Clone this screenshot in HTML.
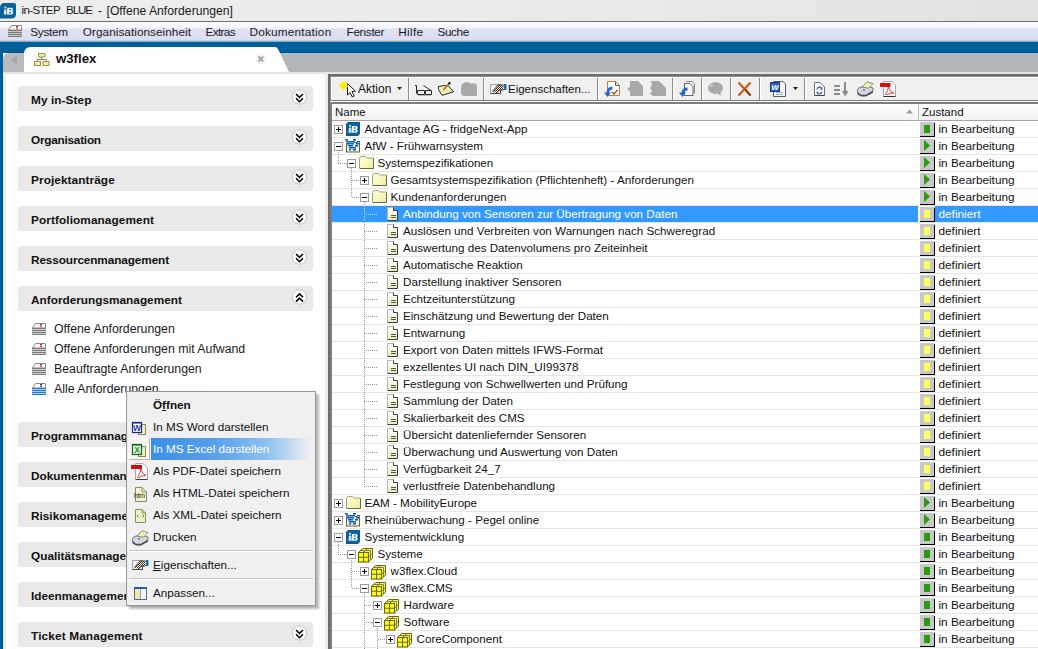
<!DOCTYPE html><html><head><meta charset="utf-8"><title>in-STEP BLUE</title><style>
*{box-sizing:border-box;margin:0;padding:0}
html,body{width:1038px;height:649px;overflow:hidden;background:#fff;font-family:"Liberation Sans", sans-serif;color:#000}
.a{position:absolute}
.t{position:absolute;white-space:nowrap;line-height:14px}
svg{position:absolute;overflow:visible}
</style></head><body>
<div class="a" style="left:0;top:0;width:1038px;height:21px;background:linear-gradient(90deg,#ededed 0%,#ebebeb 45%,#e6e6e6 80%,#e2e2e2 100%)"></div>
<div class="a" style="left:0;top:21px;width:1038px;height:1px;background:#6f6f6f"></div>
<svg style="left:0;top:0" width="17" height="20" viewBox="0 0 17 20"><path d="M4.5 3 H14 Q16 3 16 5 V13.5 Q16 18.6 11.5 18.6 H0 V8 Q0 3 4.5 3 Z" fill="#0a6098"/><g transform="translate(1.2,3.6) scale(1.02)"><rect x="3.2" y="3" width="1.8" height="1.7" fill="#e6f6ff"/><path d="M3 5.8 H5 L4.6 10.8 H2.6 Z" fill="#e6f6ff"/><path d="M6 4 H10 Q11.7 4 11.7 5.6 Q11.7 6.8 10.7 7.2 Q11.9 7.7 11.7 9.2 Q11.4 10.8 9.6 10.8 H5.2 Z" fill="#e6f6ff"/><rect x="8" y="5.3" width="1.6" height="1.3" fill="#0a6098"/><rect x="7.8" y="8.2" width="1.7" height="1.4" fill="#0a6098"/></g></svg>
<div class="t" style="left:21.5px;top:3.4px;font-size:11.6px;font-weight:400;color:#1a1a1a;letter-spacing:-0.667px">in-STEP</div>
<div class="t" style="left:66px;top:3.4px;font-size:11.6px;font-weight:400;color:#1a1a1a;letter-spacing:-1.074px">BLUE</div>
<div class="t" style="left:98px;top:4px;font-size:12.2px;font-weight:400;color:#1a1a1a;letter-spacing:-0.462px">-</div>
<div class="t" style="left:106.5px;top:4px;font-size:12.2px;font-weight:400;color:#1a1a1a;letter-spacing:0.000px">[Offene Anforderungen]</div>
<div class="a" style="left:0;top:22px;width:1038px;height:18px;background:linear-gradient(#fcfcfe 0px,#f3f4fa 6px,#dfe2f3 7px,#dcdff1 18px)"></div>
<div class="a" style="left:0;top:40px;width:1038px;height:1px;background:#c9cbd0"></div>
<svg style="left:8px;top:25px" width="15" height="13" viewBox="0 0 15 13"><path d="M3.5 0.5 H13.5 V5 H0.5 Z" fill="#fbfbfb" stroke="#8a8a8a" stroke-width="1"/><rect x="8" y="1" width="2" height="1.5" fill="#d02020"/><rect x="8" y="3" width="2" height="1.2" fill="#d02020" opacity="0.7"/><rect x="0" y="5" width="14" height="1" fill="#7a7a7a"/><rect x="0" y="6" width="14" height="1" fill="#c8c8c8"/><rect x="0" y="7" width="14" height="1" fill="#7a7a7a"/><rect x="0" y="8" width="14" height="1" fill="#c8c8c8"/><rect x="0" y="9" width="14" height="1" fill="#7a7a7a"/><rect x="0" y="10" width="14" height="1" fill="#c8c8c8"/><rect x="0" y="11" width="14" height="1" fill="#7a7a7a"/></svg>
<div class="t" style="left:30.3px;top:25px;font-size:11.8px;font-weight:400;color:#1b1b1b;letter-spacing:-0.307px">System</div>
<div class="t" style="left:82.8px;top:25px;font-size:11.8px;font-weight:400;color:#1b1b1b;letter-spacing:0.032px">Organisationseinheit</div>
<div class="t" style="left:205.5px;top:25px;font-size:11.8px;font-weight:400;color:#1b1b1b;letter-spacing:-0.656px">Extras</div>
<div class="t" style="left:249.5px;top:25px;font-size:11.8px;font-weight:400;color:#1b1b1b;letter-spacing:0.195px">Dokumentation</div>
<div class="t" style="left:346.5px;top:25px;font-size:11.8px;font-weight:400;color:#1b1b1b;letter-spacing:-0.329px">Fenster</div>
<div class="t" style="left:398.3px;top:25px;font-size:11.8px;font-weight:400;color:#1b1b1b;letter-spacing:0.298px">Hilfe</div>
<div class="t" style="left:437.4px;top:25px;font-size:11.8px;font-weight:400;color:#1b1b1b;letter-spacing:-0.371px">Suche</div>
<div class="a" style="left:0;top:41px;width:1038px;height:1px;background:#7fb3d6"></div>
<div class="a" style="left:0;top:42px;width:1038px;height:11px;background:#00609a"></div>
<div class="a" style="left:0;top:52px;width:1038px;height:1px;background:#005488"></div>
<div class="a" style="left:0;top:42px;width:3px;height:607px;background:#00609a"></div>
<div class="a" style="left:24px;top:53px;width:1014px;height:19px;background:#b2b6ba"></div>
<div class="a" style="left:24px;top:53px;width:1014px;height:1px;background:#a6bccc"></div>
<div class="a" style="left:3px;top:53px;width:24px;height:19px;background:#b9bcbf;border-top-left-radius:6px"></div>
<svg style="left:10px;top:56px" width="8" height="9"><path d="M7 0 V8 L0 4Z" fill="#a3a6aa"/></svg>
<svg style="left:24px;top:47px" width="270" height="26" viewBox="0 0 270 26"><path d="M0 25 V7 Q0 0 7 0 H251 Q253 0 254 2 L265 25 Z" fill="#ffffff"/></svg>
<svg style="left:34px;top:53px" width="16" height="13" viewBox="0 0 16 13"><rect x="4.5" y="0.5" width="6.5" height="3.5" fill="#f5ec9c" stroke="#a09548"/><path d="M7.5 4 V6.5 M3 6.5 H12.5 M3 6.5 V8 M12.5 6.5 V8" stroke="#808080" fill="none"/><rect x="0.5" y="8.5" width="6" height="4" fill="#f5ec9c" stroke="#a09548"/><rect x="9" y="8.5" width="6" height="4" fill="#f5ec9c" stroke="#a09548"/></svg>
<div class="t" style="left:56px;top:52px;font-size:13.2px;font-weight:700;color:#111">w3flex</div>
<svg style="left:255px;top:53px" width="12" height="12" viewBox="0 0 12 12"><circle cx="5.8" cy="6" r="4.8" fill="#fdfdfd" stroke="#e4e4e4" stroke-width="0.8"/><path d="M3.3 3.5 L8.3 8.5 M8.3 3.5 L3.3 8.5" stroke="#a4a4a4" stroke-width="1.9"/></svg>
<div class="a" style="left:3px;top:72px;width:1035px;height:2px;background:#e4e4e4"></div>
<div class="a" style="left:3px;top:74px;width:1px;height:575px;background:#cfe4f2"></div>
<div class="a" style="left:4px;top:74px;width:2px;height:575px;background:#f0f0f0"></div>
<div class="a" style="left:325px;top:72px;width:3px;height:577px;background:#ececec"></div>
<div class="a" style="left:18px;top:86px;width:295px;height:25px;background:#e9e9e9;border-radius:3px"></div>
<div class="t" style="left:31px;top:93px;font-size:11.8px;font-weight:700;color:#111;letter-spacing:0.084px">My in-Step</div>
<svg style="left:291px;top:88px" width="18" height="18" viewBox="291 88 18 18"><circle cx="299.5" cy="97" r="7.2" fill="#fff" stroke="#c4c4c4" stroke-width="1"/><path d="M296.0 94 L299.5 97.4 L303.0 94 M296.0 98.3 L299.5 101.7 L303.0 98.3" stroke="#000" stroke-width="1.55" fill="none"/></svg>
<div class="a" style="left:18px;top:126px;width:295px;height:25px;background:#e9e9e9;border-radius:3px"></div>
<div class="t" style="left:31px;top:133px;font-size:11.8px;font-weight:700;color:#111;letter-spacing:-0.247px">Organisation</div>
<svg style="left:291px;top:128px" width="18" height="18" viewBox="291 128 18 18"><circle cx="299.5" cy="137" r="7.2" fill="#fff" stroke="#c4c4c4" stroke-width="1"/><path d="M296.0 134 L299.5 137.4 L303.0 134 M296.0 138.3 L299.5 141.7 L303.0 138.3" stroke="#000" stroke-width="1.55" fill="none"/></svg>
<div class="a" style="left:18px;top:166px;width:295px;height:25px;background:#e9e9e9;border-radius:3px"></div>
<div class="t" style="left:31px;top:173px;font-size:11.8px;font-weight:700;color:#111;letter-spacing:0.085px">Projektantr&auml;ge</div>
<svg style="left:291px;top:168px" width="18" height="18" viewBox="291 168 18 18"><circle cx="299.5" cy="177" r="7.2" fill="#fff" stroke="#c4c4c4" stroke-width="1"/><path d="M296.0 174 L299.5 177.4 L303.0 174 M296.0 178.3 L299.5 181.7 L303.0 178.3" stroke="#000" stroke-width="1.55" fill="none"/></svg>
<div class="a" style="left:18px;top:206px;width:295px;height:25px;background:#e9e9e9;border-radius:3px"></div>
<div class="t" style="left:31px;top:213px;font-size:11.8px;font-weight:700;color:#111;letter-spacing:0.091px">Portfoliomanagement</div>
<svg style="left:291px;top:208px" width="18" height="18" viewBox="291 208 18 18"><circle cx="299.5" cy="217" r="7.2" fill="#fff" stroke="#c4c4c4" stroke-width="1"/><path d="M296.0 214 L299.5 217.4 L303.0 214 M296.0 218.3 L299.5 221.7 L303.0 218.3" stroke="#000" stroke-width="1.55" fill="none"/></svg>
<div class="a" style="left:18px;top:246px;width:295px;height:25px;background:#e9e9e9;border-radius:3px"></div>
<div class="t" style="left:31px;top:253px;font-size:11.8px;font-weight:700;color:#111;letter-spacing:-0.116px">Ressourcenmanagement</div>
<svg style="left:291px;top:248px" width="18" height="18" viewBox="291 248 18 18"><circle cx="299.5" cy="257" r="7.2" fill="#fff" stroke="#c4c4c4" stroke-width="1"/><path d="M296.0 254 L299.5 257.4 L303.0 254 M296.0 258.3 L299.5 261.7 L303.0 258.3" stroke="#000" stroke-width="1.55" fill="none"/></svg>
<div class="a" style="left:18px;top:286px;width:295px;height:25px;background:#e9e9e9;border-radius:3px"></div>
<div class="t" style="left:31px;top:293px;font-size:11.8px;font-weight:700;color:#111;letter-spacing:0.006px">Anforderungsmanagement</div>
<svg style="left:291px;top:288px" width="18" height="18" viewBox="291 288 18 18"><circle cx="299.5" cy="297" r="7.2" fill="#fff" stroke="#c4c4c4" stroke-width="1"/><path d="M296.0 301.6 L299.5 298.20000000000005 L303.0 301.6 M296.0 297.3 L299.5 293.90000000000003 L303.0 297.3" stroke="#000" stroke-width="1.55" fill="none"/></svg>
<div class="a" style="left:18px;top:422px;width:295px;height:25px;background:#e9e9e9;border-radius:3px"></div>
<div class="t" style="left:31px;top:429px;font-size:11.8px;font-weight:700;color:#111">Programmmanagement</div>
<svg style="left:291px;top:424px" width="18" height="18" viewBox="291 424 18 18"><circle cx="299.5" cy="433" r="7.2" fill="#fff" stroke="#c4c4c4" stroke-width="1"/><path d="M296.0 430 L299.5 433.4 L303.0 430 M296.0 434.3 L299.5 437.7 L303.0 434.3" stroke="#000" stroke-width="1.55" fill="none"/></svg>
<div class="a" style="left:18px;top:462px;width:295px;height:25px;background:#e9e9e9;border-radius:3px"></div>
<div class="t" style="left:31px;top:469px;font-size:11.8px;font-weight:700;color:#111">Dokumentenmanagement</div>
<svg style="left:291px;top:464px" width="18" height="18" viewBox="291 464 18 18"><circle cx="299.5" cy="473" r="7.2" fill="#fff" stroke="#c4c4c4" stroke-width="1"/><path d="M296.0 470 L299.5 473.4 L303.0 470 M296.0 474.3 L299.5 477.7 L303.0 474.3" stroke="#000" stroke-width="1.55" fill="none"/></svg>
<div class="a" style="left:18px;top:502px;width:295px;height:25px;background:#e9e9e9;border-radius:3px"></div>
<div class="t" style="left:31px;top:509px;font-size:11.8px;font-weight:700;color:#111">Risikomanagement</div>
<svg style="left:291px;top:504px" width="18" height="18" viewBox="291 504 18 18"><circle cx="299.5" cy="513" r="7.2" fill="#fff" stroke="#c4c4c4" stroke-width="1"/><path d="M296.0 510 L299.5 513.4 L303.0 510 M296.0 514.3 L299.5 517.7 L303.0 514.3" stroke="#000" stroke-width="1.55" fill="none"/></svg>
<div class="a" style="left:18px;top:542px;width:295px;height:25px;background:#e9e9e9;border-radius:3px"></div>
<div class="t" style="left:31px;top:549px;font-size:11.8px;font-weight:700;color:#111">Qualit&auml;tsmanagement</div>
<svg style="left:291px;top:544px" width="18" height="18" viewBox="291 544 18 18"><circle cx="299.5" cy="553" r="7.2" fill="#fff" stroke="#c4c4c4" stroke-width="1"/><path d="M296.0 550 L299.5 553.4 L303.0 550 M296.0 554.3 L299.5 557.7 L303.0 554.3" stroke="#000" stroke-width="1.55" fill="none"/></svg>
<div class="a" style="left:18px;top:582px;width:295px;height:25px;background:#e9e9e9;border-radius:3px"></div>
<div class="t" style="left:31px;top:589px;font-size:11.8px;font-weight:700;color:#111">Ideenmanagement</div>
<svg style="left:291px;top:584px" width="18" height="18" viewBox="291 584 18 18"><circle cx="299.5" cy="593" r="7.2" fill="#fff" stroke="#c4c4c4" stroke-width="1"/><path d="M296.0 590 L299.5 593.4 L303.0 590 M296.0 594.3 L299.5 597.7 L303.0 594.3" stroke="#000" stroke-width="1.55" fill="none"/></svg>
<div class="a" style="left:18px;top:622px;width:295px;height:25px;background:#e9e9e9;border-radius:3px"></div>
<div class="t" style="left:31px;top:629px;font-size:11.8px;font-weight:700;color:#111;letter-spacing:0.143px">Ticket Management</div>
<svg style="left:291px;top:624px" width="18" height="18" viewBox="291 624 18 18"><circle cx="299.5" cy="633" r="7.2" fill="#fff" stroke="#c4c4c4" stroke-width="1"/><path d="M296.0 630 L299.5 633.4 L303.0 630 M296.0 634.3 L299.5 637.7 L303.0 634.3" stroke="#000" stroke-width="1.55" fill="none"/></svg>
<svg style="left:32px;top:323px" width="15" height="13" viewBox="0 0 15 13"><path d="M3.5 0.5 H13.5 V5 H0.5 Z" fill="#fbfbfb" stroke="#8a8a8a" stroke-width="1"/><rect x="8" y="1" width="2" height="1.5" fill="#d02020"/><rect x="8" y="3" width="2" height="1.2" fill="#d02020" opacity="0.7"/><rect x="0" y="5" width="14" height="1" fill="#7a7a7a"/><rect x="0" y="6" width="14" height="1" fill="#d0d0d0"/><rect x="0" y="7" width="14" height="1" fill="#7a7a7a"/><rect x="0" y="8" width="14" height="1" fill="#d0d0d0"/><rect x="0" y="9" width="14" height="1" fill="#7a7a7a"/><rect x="0" y="10" width="14" height="1" fill="#d0d0d0"/><rect x="0" y="11" width="14" height="1" fill="#7a7a7a"/></svg>
<div class="t" style="left:54px;top:322px;font-size:12.3px;color:#1a1a1a">Offene Anforderungen</div>
<svg style="left:32px;top:343px" width="15" height="13" viewBox="0 0 15 13"><path d="M3.5 0.5 H13.5 V5 H0.5 Z" fill="#fbfbfb" stroke="#8a8a8a" stroke-width="1"/><rect x="8" y="1" width="2" height="1.5" fill="#d02020"/><rect x="8" y="3" width="2" height="1.2" fill="#d02020" opacity="0.7"/><rect x="0" y="5" width="14" height="1" fill="#7a7a7a"/><rect x="0" y="6" width="14" height="1" fill="#d0d0d0"/><rect x="0" y="7" width="14" height="1" fill="#7a7a7a"/><rect x="0" y="8" width="14" height="1" fill="#d0d0d0"/><rect x="0" y="9" width="14" height="1" fill="#7a7a7a"/><rect x="0" y="10" width="14" height="1" fill="#d0d0d0"/><rect x="0" y="11" width="14" height="1" fill="#7a7a7a"/></svg>
<div class="t" style="left:54px;top:342px;font-size:12.3px;color:#1a1a1a">Offene Anforderungen mit Aufwand</div>
<svg style="left:32px;top:363px" width="15" height="13" viewBox="0 0 15 13"><path d="M3.5 0.5 H13.5 V5 H0.5 Z" fill="#fbfbfb" stroke="#8a8a8a" stroke-width="1"/><rect x="8" y="1" width="2" height="1.5" fill="#d02020"/><rect x="8" y="3" width="2" height="1.2" fill="#d02020" opacity="0.7"/><rect x="0" y="5" width="14" height="1" fill="#7a7a7a"/><rect x="0" y="6" width="14" height="1" fill="#d0d0d0"/><rect x="0" y="7" width="14" height="1" fill="#7a7a7a"/><rect x="0" y="8" width="14" height="1" fill="#d0d0d0"/><rect x="0" y="9" width="14" height="1" fill="#7a7a7a"/><rect x="0" y="10" width="14" height="1" fill="#d0d0d0"/><rect x="0" y="11" width="14" height="1" fill="#7a7a7a"/></svg>
<div class="t" style="left:54px;top:362px;font-size:12.3px;color:#1a1a1a">Beauftragte Anforderungen</div>
<svg style="left:32px;top:383px" width="15" height="13" viewBox="0 0 15 13"><path d="M3.5 0.5 H13.5 V5 H0.5 Z" fill="#fbfbfb" stroke="#8a8a8a" stroke-width="1"/><rect x="8" y="1" width="2" height="1.5" fill="#1a3a8a"/><rect x="8" y="3" width="2" height="1.2" fill="#1a3a8a" opacity="0.7"/><rect x="0" y="5" width="14" height="1" fill="#2a78d0"/><rect x="0" y="6" width="14" height="1" fill="#a8d0f4"/><rect x="0" y="7" width="14" height="1" fill="#2a78d0"/><rect x="0" y="8" width="14" height="1" fill="#a8d0f4"/><rect x="0" y="9" width="14" height="1" fill="#2a78d0"/><rect x="0" y="10" width="14" height="1" fill="#a8d0f4"/><rect x="0" y="11" width="14" height="1" fill="#2a78d0"/></svg>
<div class="t" style="left:54px;top:382px;font-size:12.3px;color:#1a1a1a">Alle Anforderungen</div>
<div class="a" style="left:328px;top:74px;width:710px;height:575px;background:#6c6c6c"></div>
<div class="a" style="left:330px;top:76px;width:708px;height:25px;background:#8c8c8c"></div>
<div class="a" style="left:331px;top:77px;width:707px;height:23px;background:#ffffff"></div>
<div class="a" style="left:332px;top:78px;width:706px;height:22px;background:#f0f0f0"></div>
<div class="a" style="left:330px;top:100px;width:708px;height:1px;background:#7c7c7c"></div>
<div class="a" style="left:330px;top:101px;width:708px;height:1px;background:#ffffff"></div>
<div class="a" style="left:408px;top:78px;width:1px;height:22px;background:#8a8a8a"></div>
<div class="a" style="left:409px;top:78px;width:1px;height:22px;background:#ffffff"></div>
<div class="a" style="left:483px;top:78px;width:1px;height:22px;background:#8a8a8a"></div>
<div class="a" style="left:484px;top:78px;width:1px;height:22px;background:#ffffff"></div>
<div class="a" style="left:597px;top:78px;width:1px;height:22px;background:#8a8a8a"></div>
<div class="a" style="left:598px;top:78px;width:1px;height:22px;background:#ffffff"></div>
<div class="a" style="left:672px;top:78px;width:1px;height:22px;background:#8a8a8a"></div>
<div class="a" style="left:673px;top:78px;width:1px;height:22px;background:#ffffff"></div>
<div class="a" style="left:701px;top:78px;width:1px;height:22px;background:#8a8a8a"></div>
<div class="a" style="left:702px;top:78px;width:1px;height:22px;background:#ffffff"></div>
<div class="a" style="left:730px;top:78px;width:1px;height:22px;background:#8a8a8a"></div>
<div class="a" style="left:731px;top:78px;width:1px;height:22px;background:#ffffff"></div>
<div class="a" style="left:759px;top:78px;width:1px;height:22px;background:#8a8a8a"></div>
<div class="a" style="left:760px;top:78px;width:1px;height:22px;background:#ffffff"></div>
<div class="a" style="left:804px;top:78px;width:1px;height:22px;background:#8a8a8a"></div>
<div class="a" style="left:805px;top:78px;width:1px;height:22px;background:#ffffff"></div>
<div class="t" style="left:358px;top:82px;font-size:12px;color:#111">Aktion</div>
<svg style="left:397px;top:87px" width="6" height="4"><path d="M0 0 H5 L2.5 3Z" fill="#222"/></svg>
<div class="t" style="left:508px;top:82px;font-size:11.5px;color:#111">Eigenschaften...</div>
<svg style="left:793px;top:87px" width="6" height="4"><path d="M0 0 H5 L2.5 3Z" fill="#222"/></svg>
<svg style="left:0;top:0" width="1038" height="110" viewBox="0 0 1038 110"><defs><pattern id="chk" width="2" height="2" patternUnits="userSpaceOnUse"><rect width="2" height="2" fill="#fff6dc"/><rect width="1" height="1" fill="#3a3020"/><rect x="1" y="1" width="1" height="1" fill="#3a3020"/></pattern></defs>
<path d="M347.5 83.5 V95 L350 92.6 L352.3 97 L354.2 96.1 L352 91.6 L355.4 91.2 Z" fill="#fff" stroke="#1a1a1a" stroke-width="1" stroke-linejoin="miter"/><circle cx="343.5" cy="85.6" r="4.4" fill="#fff27a" opacity="0.55"/><circle cx="343.5" cy="85.6" r="3.1" fill="#ffee00"/><path d="M343.5 80.8 V90.4 M338.7 85.6 H348.3 M340.2 82.3 L346.8 88.9 M346.8 82.3 L340.2 88.9" stroke="#ffe800" stroke-width="0.9" opacity="0.8"/>
<path d="M415 85.5 H416.5 V93.5 M417.5 90.5 H424.5 V94.5 H417.5 Z M425.5 90.5 H431.5 V94.5 H425.5 Z M423.5 85.5 L431 90.5" stroke="#2a2a2a" fill="none" stroke-width="1"/><rect x="418" y="95" width="13" height="1" fill="#b8b8b8"/>
<path d="M438.5 86.5 L444.5 85.5 H448 L453.6 91.8 L442 95.3 L438.5 89.5 Z" fill="#eef2bc" stroke="#262626" stroke-width="1"/><path d="M443.2 90 L449 83.8" stroke="#c8804a" stroke-width="2"/><circle cx="449.4" cy="83.3" r="1.2" fill="#1a1a1a"/>
<path d="M461 88 Q461 82 467 82 Q469.5 82 470.5 83.5 H475 Q477 83.5 477 86 V96 H464 Q461 96 461 92 Z" fill="#a8a8a8"/>
<path d="M490.5 84.5 H500.5 V93.5 H490.5 Z" fill="#f4f4f4" stroke="#a0a0a0"/><path d="M490.5 93.5 H500.5 V88" stroke="#444" fill="none"/><path d="M492.5 91.5 L498 85 H503.5 V90 H499.5 L496.5 93 Z" fill="url(#chk)"/><path d="M492.5 91.5 L498 85 H503.5 M496.5 93 L499.5 90 H503.5" stroke="#2a2418" fill="none" stroke-width="0.9"/><rect x="504" y="84" width="2.5" height="6" fill="#1a70b0"/>
<path d="M607.5 81.5 H615.5 L619.5 85.5 V95.5 H607.5 Z" fill="#fff" stroke="#c08040"/><path d="M615.5 81.5 V85.5 H619.5" fill="none" stroke="#606060"/><path d="M612 92 L614 94 L617.5 90" stroke="#b04818" stroke-width="1.4" fill="none"/><path d="M612.5 86.5 Q607 86.5 606.5 92.5 H604 L607.5 97 L611 92.5 H609 Q609.5 89.5 612.5 89.5 Z" fill="#1e6ad0"/>
<path d="M630 81 H638 L643 86 V96 H630 V91.5 L627 89 L630 86.5 Z" fill="#a8a8a8"/>
<path d="M651 81 H659 L666 88 V96 H653 L650 94 L652 91 L650 88 L652 85 Z" fill="#a8a8a8"/>
<path d="M686.5 81.5 H692 L694.5 84 V93.5" fill="none" stroke="#808080"/><path d="M684.5 83.5 H690 L693 86.5 V95.5 H684.5 Z" fill="#f8f8f8" stroke="#606060"/><path d="M687.5 87.5 Q682 87.5 681.5 92.5 H679 L682.5 97 L686 92.5 H684 Q684.5 90.5 687.5 90.5 Z" fill="#1e6ad0"/>
<ellipse cx="715.5" cy="88" rx="7.5" ry="6" fill="#a8a8a8"/><path d="M716 92 L721 96 L720 91 Z" fill="#a8a8a8"/><ellipse cx="711.5" cy="85.5" rx="1.5" ry="1" fill="#d8d8d8"/>
<path d="M738.5 82.5 L750.5 95.5 M750.5 82.5 L738.5 95.5" stroke="#d05818" stroke-width="2.2"/><path d="M745 89 L750.5 95.5" stroke="#8a2a10" stroke-width="1.2"/>
<path d="M773.5 81.5 H783 L785.5 84 V96.5 H773.5 Z" fill="#f4f8ff" stroke="#505a70"/><path d="M776 92.5 H783 M776 94.5 H783" stroke="#9ab"/><rect x="770.5" y="82.5" width="9" height="9" fill="#2a62c8" stroke="#1a3a80"/><text x="775" y="90.3" text-anchor="middle" font-family="Liberation Sans" font-weight="700" font-style="italic" font-size="8" fill="#fff">W</text>
<path d="M814.5 82.5 H820 L824.5 87 V95.5 H814.5 Z" fill="#f8f8f8" stroke="#707070"/><path d="M814.5 95.5 H824.5" stroke="#404040"/><path d="M817 89.5 A2.6 2.6 0 0 1 822 88.8 M822 91.5 A2.6 2.6 0 0 1 817 92.2" stroke="#2a5ab0" fill="none" stroke-width="1.2"/><path d="M821 87.5 L823 89.5 L820.5 90Z M818 93.8 L816 92 L818.5 91.5Z" fill="#2a5ab0"/>
<path d="M834 86 H840 M834 90 H840 M834 94 H840" stroke="#8c8c8c" stroke-width="2"/><path d="M845 82 V94" stroke="#8c8c8c" stroke-width="2"/><path d="M842 91 H848.5 L845.2 96.5Z" fill="#8c8c8c"/>
<path d="M857.5 90 Q858 87.5 861 87 L868 86.5 L873 88 V91 L866 95.5 H861 Q857.5 95 857.5 92 Z" fill="#d4d8de" stroke="#5a5a5a" stroke-width="0.8"/><path d="M857.5 92 L861 94.8 H866 L873 90.8 V92.8 L866 96.6 H861 L857.5 94 Z" fill="#4a4a4a"/><path d="M862 87 L867 81.8 L873 83.6 L868.6 88.2 Z" fill="#eef2b4" stroke="#6a6a48" stroke-width="0.7"/><circle cx="864" cy="90" r="0.9" fill="#2a70c0"/>
<path d="M883.5 81.5 H892 L895.5 85 V96.5 H883.5 Z" fill="#fff" stroke="#a8a8a8"/><path d="M883.5 96.5 H895.5" stroke="#303030"/><rect x="880" y="83" width="10.5" height="4" fill="#d80c10"/><path d="M885.5 95 Q888 90 888.5 87 Q889.5 92 894 93 Q890 92.5 886.5 95" stroke="#e02828" fill="none" stroke-width="0.9"/>
</svg>
<div class="a" style="left:330px;top:102px;width:708px;height:547px;background:#7c7c7c"></div>
<div class="a" style="left:332px;top:104px;width:706px;height:545px;background:#fff"></div>
<div class="a" style="left:333px;top:105px;width:705px;height:15px;background:linear-gradient(#fdfdfd,#f2f2f2)"></div>
<div class="a" style="left:332px;top:120px;width:706px;height:1px;background:#a6a6a6"></div>
<div class="a" style="left:918px;top:104px;width:1px;height:16px;background:#bcbcbc"></div>
<div class="t" style="left:335px;top:105px;font-size:11.5px;color:#111">Name</div>
<svg style="left:906px;top:109px" width="8" height="5"><path d="M0 4.5 H7 L3.5 0.5Z" fill="#9a9a9a"/></svg>
<div class="t" style="left:922px;top:105px;font-size:11.5px;color:#111">Zustand</div>
<div class="a" style="left:0;top:0;width:1038px;height:649px;overflow:hidden"><svg style="left:0;top:0" width="1038" height="649" viewBox="0 0 1038 649">
<defs><linearGradient id="fold" x1="0" y1="0" x2="1" y2="1"><stop offset="0" stop-color="#fdfde6"/><stop offset="0.6" stop-color="#f6f6b8"/><stop offset="1" stop-color="#e8e8a0"/></linearGradient><linearGradient id="docg" x1="0" y1="0" x2="0" y2="1"><stop offset="0" stop-color="#ffffff"/><stop offset="0.35" stop-color="#fafaf0"/><stop offset="1" stop-color="#e4ecbc"/></linearGradient><pattern id="dotv" width="1" height="2" patternUnits="userSpaceOnUse"><rect width="1" height="1" fill="#9a9a9a"/></pattern><pattern id="doth" width="2" height="1" patternUnits="userSpaceOnUse"><rect width="1" height="1" fill="#9a9a9a"/></pattern><pattern id="dotvL" width="1" height="2" patternUnits="userSpaceOnUse"><rect width="1" height="1" fill="#b8d8ff"/></pattern><pattern id="dothL" width="2" height="1" patternUnits="userSpaceOnUse"><rect width="1" height="1" fill="#b8d8ff"/></pattern></defs>
<rect x="332" y="137" width="706" height="1" fill="#e6e6e6"/>
<rect x="332" y="154" width="706" height="1" fill="#e6e6e6"/>
<rect x="332" y="171" width="706" height="1" fill="#e6e6e6"/>
<rect x="332" y="188" width="706" height="1" fill="#e6e6e6"/>
<rect x="332" y="205" width="706" height="1" fill="#e6e6e6"/>
<rect x="332" y="206" width="586" height="16" fill="#3399ff"/>
<rect x="935" y="206" width="103" height="16" fill="#3399ff"/>
<rect x="332" y="222" width="706" height="1" fill="#e6e6e6"/>
<rect x="332" y="239" width="706" height="1" fill="#e6e6e6"/>
<rect x="332" y="256" width="706" height="1" fill="#e6e6e6"/>
<rect x="332" y="273" width="706" height="1" fill="#e6e6e6"/>
<rect x="332" y="290" width="706" height="1" fill="#e6e6e6"/>
<rect x="332" y="307" width="706" height="1" fill="#e6e6e6"/>
<rect x="332" y="324" width="706" height="1" fill="#e6e6e6"/>
<rect x="332" y="341" width="706" height="1" fill="#e6e6e6"/>
<rect x="332" y="358" width="706" height="1" fill="#e6e6e6"/>
<rect x="332" y="375" width="706" height="1" fill="#e6e6e6"/>
<rect x="332" y="392" width="706" height="1" fill="#e6e6e6"/>
<rect x="332" y="409" width="706" height="1" fill="#e6e6e6"/>
<rect x="332" y="426" width="706" height="1" fill="#e6e6e6"/>
<rect x="332" y="443" width="706" height="1" fill="#e6e6e6"/>
<rect x="332" y="460" width="706" height="1" fill="#e6e6e6"/>
<rect x="332" y="477" width="706" height="1" fill="#e6e6e6"/>
<rect x="332" y="494" width="706" height="1" fill="#e6e6e6"/>
<rect x="332" y="511" width="706" height="1" fill="#e6e6e6"/>
<rect x="332" y="528" width="706" height="1" fill="#e6e6e6"/>
<rect x="332" y="545" width="706" height="1" fill="#e6e6e6"/>
<rect x="332" y="562" width="706" height="1" fill="#e6e6e6"/>
<rect x="332" y="579" width="706" height="1" fill="#e6e6e6"/>
<rect x="332" y="596" width="706" height="1" fill="#e6e6e6"/>
<rect x="332" y="613" width="706" height="1" fill="#e6e6e6"/>
<rect x="332" y="630" width="706" height="1" fill="#e6e6e6"/>
<rect x="332" y="647" width="706" height="1" fill="#e6e6e6"/>
<rect x="338" y="163" width="9" height="1" fill="url(#doth)"/>
<rect x="351" y="180" width="9" height="1" fill="url(#doth)"/>
<rect x="351" y="197" width="9" height="1" fill="url(#doth)"/>
<rect x="364" y="214" width="14" height="1" fill="url(#doth)"/>
<rect x="364" y="231" width="14" height="1" fill="url(#doth)"/>
<rect x="364" y="248" width="14" height="1" fill="url(#doth)"/>
<rect x="364" y="265" width="14" height="1" fill="url(#doth)"/>
<rect x="364" y="282" width="14" height="1" fill="url(#doth)"/>
<rect x="364" y="299" width="14" height="1" fill="url(#doth)"/>
<rect x="364" y="316" width="14" height="1" fill="url(#doth)"/>
<rect x="364" y="333" width="14" height="1" fill="url(#doth)"/>
<rect x="364" y="350" width="14" height="1" fill="url(#doth)"/>
<rect x="364" y="367" width="14" height="1" fill="url(#doth)"/>
<rect x="364" y="384" width="14" height="1" fill="url(#doth)"/>
<rect x="364" y="401" width="14" height="1" fill="url(#doth)"/>
<rect x="364" y="418" width="14" height="1" fill="url(#doth)"/>
<rect x="364" y="435" width="14" height="1" fill="url(#doth)"/>
<rect x="364" y="452" width="14" height="1" fill="url(#doth)"/>
<rect x="364" y="469" width="14" height="1" fill="url(#doth)"/>
<rect x="364" y="486" width="14" height="1" fill="url(#doth)"/>
<rect x="338" y="554" width="9" height="1" fill="url(#doth)"/>
<rect x="351" y="571" width="9" height="1" fill="url(#doth)"/>
<rect x="351" y="588" width="9" height="1" fill="url(#doth)"/>
<rect x="364" y="605" width="9" height="1" fill="url(#doth)"/>
<rect x="364" y="622" width="9" height="1" fill="url(#doth)"/>
<rect x="377" y="639" width="9" height="1" fill="url(#doth)"/>
<rect x="338" y="151" width="1" height="12" fill="url(#dotv)"/>
<rect x="351" y="168" width="1" height="29" fill="url(#dotv)"/>
<rect x="364" y="202" width="1" height="284" fill="url(#dotv)"/>
<rect x="338" y="542" width="1" height="12" fill="url(#dotv)"/>
<rect x="351" y="559" width="1" height="29" fill="url(#dotv)"/>
<rect x="364" y="593" width="1" height="29" fill="url(#dotv)"/>
<rect x="377" y="627" width="1" height="12" fill="url(#dotv)"/>
<rect x="364" y="206" width="1" height="16" fill="url(#dotvL)"/><rect x="364" y="214" width="14" height="1" fill="url(#dothL)"/>
<rect x="364" y="622" width="1" height="27" fill="url(#dotv)"/>
<rect x="377" y="639" width="1" height="10" fill="url(#dotv)"/>
<rect x="334.5" y="125.5" width="8" height="8" fill="#fff" stroke="#9c9c9c"/>
<rect x="336" y="129" width="5" height="1" fill="#000"/>
<rect x="338" y="127" width="1" height="5" fill="#000"/>
<g transform="translate(346,122)"><path d="M2 0 H14 V12 L12 14 H0 V2 Z" fill="#0b5a90"/><rect x="1" y="1" width="12" height="12" fill="#0f66a2" opacity="0.7"/><rect x="3.2" y="3" width="1.8" height="1.7" fill="#e6f6ff"/><path d="M3 5.8 H5 L4.6 10.8 H2.6 Z" fill="#e6f6ff"/><path d="M6 4 H10 Q11.7 4 11.7 5.6 Q11.7 6.8 10.7 7.2 Q11.9 7.7 11.7 9.2 Q11.4 10.8 9.6 10.8 H5.2 Z" fill="#e6f6ff"/><rect x="8" y="5.3" width="1.6" height="1.3" fill="#0b5a90"/><rect x="7.8" y="8.2" width="1.7" height="1.4" fill="#0b5a90"/></g>
<rect x="920" y="122" width="15" height="15" fill="#c8c8c8"/><rect x="934" y="123" width="1" height="14" fill="#000"/><rect x="920" y="136" width="15" height="1" fill="#000"/><rect x="924" y="125" width="6" height="8" fill="#2a9a10"/>
<rect x="334.5" y="142.5" width="8" height="8" fill="#fff" stroke="#9c9c9c"/>
<rect x="336" y="146" width="5" height="1" fill="#000"/>
<rect x="346.5" y="142.5" width="13" height="9.5" fill="#f6f2d0" stroke="#6a6030"/><rect x="345" y="139" width="3" height="1" fill="#1d5aa8"/><rect x="345" y="140" width="3" height="1" fill="#5aaaf0"/><rect x="353" y="139" width="3" height="1" fill="#1d5aa8"/><rect x="353" y="140" width="3" height="1" fill="#5aaaf0"/><rect x="346" y="141" width="9" height="1" fill="#1d5aa8"/><rect x="346" y="142" width="9" height="1" fill="#5aaaf0"/><rect x="357" y="141" width="3" height="1" fill="#1d5aa8"/><rect x="357" y="142" width="3" height="1" fill="#5aaaf0"/><rect x="347" y="143" width="7" height="1" fill="#1d5aa8"/><rect x="347" y="144" width="7" height="1" fill="#5aaaf0"/><rect x="356" y="143" width="3" height="1" fill="#1d5aa8"/><rect x="356" y="144" width="3" height="1" fill="#5aaaf0"/><rect x="348" y="145" width="5" height="1" fill="#1d5aa8"/><rect x="348" y="146" width="5" height="1" fill="#5aaaf0"/><rect x="355" y="145" width="3" height="1" fill="#1d5aa8"/><rect x="355" y="146" width="3" height="1" fill="#5aaaf0"/><rect x="349" y="147" width="7" height="1" fill="#1d5aa8"/><rect x="349" y="148" width="7" height="1" fill="#5aaaf0"/><rect x="349" y="149" width="2" height="1" fill="#1d5aa8"/><rect x="349" y="150" width="2" height="1" fill="#5aaaf0"/><rect x="353" y="149" width="3" height="1" fill="#1d5aa8"/><rect x="353" y="150" width="3" height="1" fill="#5aaaf0"/>
<rect x="920" y="139" width="15" height="15" fill="#c8c8c8"/><rect x="934" y="140" width="1" height="14" fill="#000"/><rect x="920" y="153" width="15" height="1" fill="#000"/><path d="M924 140 L930 145.5 L924 151Z" fill="#2a9c0e"/>
<rect x="347.5" y="159.5" width="8" height="8" fill="#fff" stroke="#9c9c9c"/>
<rect x="349" y="163" width="5" height="1" fill="#000"/>
<path d="M359.5 168.5 V158.5 Q359.5 156.5 361.5 156.5 H365.5 L367 158 H373.5 V168.5 Z" fill="url(#fold)" stroke="#a8a470"/><path d="M360 168.5 H373.5 V158.5" fill="none" stroke="#6a6a40"/>
<rect x="920" y="156" width="15" height="15" fill="#c8c8c8"/><rect x="934" y="157" width="1" height="14" fill="#000"/><rect x="920" y="170" width="15" height="1" fill="#000"/><path d="M924 157 L930 162.5 L924 168Z" fill="#2a9c0e"/>
<rect x="360.5" y="176.5" width="8" height="8" fill="#fff" stroke="#9c9c9c"/>
<rect x="362" y="180" width="5" height="1" fill="#000"/>
<rect x="364" y="178" width="1" height="5" fill="#000"/>
<path d="M372.5 185.5 V175.5 Q372.5 173.5 374.5 173.5 H378.5 L380 175 H386.5 V185.5 Z" fill="url(#fold)" stroke="#a8a470"/><path d="M373 185.5 H386.5 V175.5" fill="none" stroke="#6a6a40"/>
<rect x="920" y="173" width="15" height="15" fill="#c8c8c8"/><rect x="934" y="174" width="1" height="14" fill="#000"/><rect x="920" y="187" width="15" height="1" fill="#000"/><path d="M924 174 L930 179.5 L924 185Z" fill="#2a9c0e"/>
<rect x="360.5" y="193.5" width="8" height="8" fill="#fff" stroke="#9c9c9c"/>
<rect x="362" y="197" width="5" height="1" fill="#000"/>
<path d="M372.5 202.5 V192.5 Q372.5 190.5 374.5 190.5 H378.5 L380 192 H386.5 V202.5 Z" fill="url(#fold)" stroke="#a8a470"/><path d="M373 202.5 H386.5 V192.5" fill="none" stroke="#6a6a40"/>
<rect x="920" y="190" width="15" height="15" fill="#c8c8c8"/><rect x="934" y="191" width="1" height="14" fill="#000"/><rect x="920" y="204" width="15" height="1" fill="#000"/><path d="M924 191 L930 196.5 L924 202Z" fill="#2a9c0e"/>
<path d="M387.5 207.5 H393.5 V210.5 H397.5 V220.5 H387.5 Z" fill="url(#docg)"/><path d="M387.5 220.5 V207.5 H393.5" fill="none" stroke="#b4b4b0"/><path d="M393.5 207.5 V210.5 H397.5 V220.5 H387.5" fill="none" stroke="#3c3c36"/><rect x="391" y="215" width="5" height="1" fill="#4a5a3a"/><rect x="391" y="217" width="5" height="1" fill="#4a5a3a"/>
<rect x="920" y="207" width="15" height="15" fill="#c8c8c8"/><rect x="934" y="208" width="1" height="14" fill="#000"/><rect x="920" y="221" width="15" height="1" fill="#000"/><rect x="924" y="210" width="6" height="8" fill="#ffff60"/>
<path d="M387.5 224.5 H393.5 V227.5 H397.5 V237.5 H387.5 Z" fill="url(#docg)"/><path d="M387.5 237.5 V224.5 H393.5" fill="none" stroke="#b4b4b0"/><path d="M393.5 224.5 V227.5 H397.5 V237.5 H387.5" fill="none" stroke="#3c3c36"/><rect x="391" y="232" width="5" height="1" fill="#4a5a3a"/><rect x="391" y="234" width="5" height="1" fill="#4a5a3a"/>
<rect x="920" y="224" width="15" height="15" fill="#c8c8c8"/><rect x="934" y="225" width="1" height="14" fill="#000"/><rect x="920" y="238" width="15" height="1" fill="#000"/><rect x="924" y="227" width="6" height="8" fill="#ffff60"/>
<path d="M387.5 241.5 H393.5 V244.5 H397.5 V254.5 H387.5 Z" fill="url(#docg)"/><path d="M387.5 254.5 V241.5 H393.5" fill="none" stroke="#b4b4b0"/><path d="M393.5 241.5 V244.5 H397.5 V254.5 H387.5" fill="none" stroke="#3c3c36"/><rect x="391" y="249" width="5" height="1" fill="#4a5a3a"/><rect x="391" y="251" width="5" height="1" fill="#4a5a3a"/>
<rect x="920" y="241" width="15" height="15" fill="#c8c8c8"/><rect x="934" y="242" width="1" height="14" fill="#000"/><rect x="920" y="255" width="15" height="1" fill="#000"/><rect x="924" y="244" width="6" height="8" fill="#ffff60"/>
<path d="M387.5 258.5 H393.5 V261.5 H397.5 V271.5 H387.5 Z" fill="url(#docg)"/><path d="M387.5 271.5 V258.5 H393.5" fill="none" stroke="#b4b4b0"/><path d="M393.5 258.5 V261.5 H397.5 V271.5 H387.5" fill="none" stroke="#3c3c36"/><rect x="391" y="266" width="5" height="1" fill="#4a5a3a"/><rect x="391" y="268" width="5" height="1" fill="#4a5a3a"/>
<rect x="920" y="258" width="15" height="15" fill="#c8c8c8"/><rect x="934" y="259" width="1" height="14" fill="#000"/><rect x="920" y="272" width="15" height="1" fill="#000"/><rect x="924" y="261" width="6" height="8" fill="#ffff60"/>
<path d="M387.5 275.5 H393.5 V278.5 H397.5 V288.5 H387.5 Z" fill="url(#docg)"/><path d="M387.5 288.5 V275.5 H393.5" fill="none" stroke="#b4b4b0"/><path d="M393.5 275.5 V278.5 H397.5 V288.5 H387.5" fill="none" stroke="#3c3c36"/><rect x="391" y="283" width="5" height="1" fill="#4a5a3a"/><rect x="391" y="285" width="5" height="1" fill="#4a5a3a"/>
<rect x="920" y="275" width="15" height="15" fill="#c8c8c8"/><rect x="934" y="276" width="1" height="14" fill="#000"/><rect x="920" y="289" width="15" height="1" fill="#000"/><rect x="924" y="278" width="6" height="8" fill="#ffff60"/>
<path d="M387.5 292.5 H393.5 V295.5 H397.5 V305.5 H387.5 Z" fill="url(#docg)"/><path d="M387.5 305.5 V292.5 H393.5" fill="none" stroke="#b4b4b0"/><path d="M393.5 292.5 V295.5 H397.5 V305.5 H387.5" fill="none" stroke="#3c3c36"/><rect x="391" y="300" width="5" height="1" fill="#4a5a3a"/><rect x="391" y="302" width="5" height="1" fill="#4a5a3a"/>
<rect x="920" y="292" width="15" height="15" fill="#c8c8c8"/><rect x="934" y="293" width="1" height="14" fill="#000"/><rect x="920" y="306" width="15" height="1" fill="#000"/><rect x="924" y="295" width="6" height="8" fill="#ffff60"/>
<path d="M387.5 309.5 H393.5 V312.5 H397.5 V322.5 H387.5 Z" fill="url(#docg)"/><path d="M387.5 322.5 V309.5 H393.5" fill="none" stroke="#b4b4b0"/><path d="M393.5 309.5 V312.5 H397.5 V322.5 H387.5" fill="none" stroke="#3c3c36"/><rect x="391" y="317" width="5" height="1" fill="#4a5a3a"/><rect x="391" y="319" width="5" height="1" fill="#4a5a3a"/>
<rect x="920" y="309" width="15" height="15" fill="#c8c8c8"/><rect x="934" y="310" width="1" height="14" fill="#000"/><rect x="920" y="323" width="15" height="1" fill="#000"/><rect x="924" y="312" width="6" height="8" fill="#ffff60"/>
<path d="M387.5 326.5 H393.5 V329.5 H397.5 V339.5 H387.5 Z" fill="url(#docg)"/><path d="M387.5 339.5 V326.5 H393.5" fill="none" stroke="#b4b4b0"/><path d="M393.5 326.5 V329.5 H397.5 V339.5 H387.5" fill="none" stroke="#3c3c36"/><rect x="391" y="334" width="5" height="1" fill="#4a5a3a"/><rect x="391" y="336" width="5" height="1" fill="#4a5a3a"/>
<rect x="920" y="326" width="15" height="15" fill="#c8c8c8"/><rect x="934" y="327" width="1" height="14" fill="#000"/><rect x="920" y="340" width="15" height="1" fill="#000"/><rect x="924" y="329" width="6" height="8" fill="#ffff60"/>
<path d="M387.5 343.5 H393.5 V346.5 H397.5 V356.5 H387.5 Z" fill="url(#docg)"/><path d="M387.5 356.5 V343.5 H393.5" fill="none" stroke="#b4b4b0"/><path d="M393.5 343.5 V346.5 H397.5 V356.5 H387.5" fill="none" stroke="#3c3c36"/><rect x="391" y="351" width="5" height="1" fill="#4a5a3a"/><rect x="391" y="353" width="5" height="1" fill="#4a5a3a"/>
<rect x="920" y="343" width="15" height="15" fill="#c8c8c8"/><rect x="934" y="344" width="1" height="14" fill="#000"/><rect x="920" y="357" width="15" height="1" fill="#000"/><rect x="924" y="346" width="6" height="8" fill="#ffff60"/>
<path d="M387.5 360.5 H393.5 V363.5 H397.5 V373.5 H387.5 Z" fill="url(#docg)"/><path d="M387.5 373.5 V360.5 H393.5" fill="none" stroke="#b4b4b0"/><path d="M393.5 360.5 V363.5 H397.5 V373.5 H387.5" fill="none" stroke="#3c3c36"/><rect x="391" y="368" width="5" height="1" fill="#4a5a3a"/><rect x="391" y="370" width="5" height="1" fill="#4a5a3a"/>
<rect x="920" y="360" width="15" height="15" fill="#c8c8c8"/><rect x="934" y="361" width="1" height="14" fill="#000"/><rect x="920" y="374" width="15" height="1" fill="#000"/><rect x="924" y="363" width="6" height="8" fill="#ffff60"/>
<path d="M387.5 377.5 H393.5 V380.5 H397.5 V390.5 H387.5 Z" fill="url(#docg)"/><path d="M387.5 390.5 V377.5 H393.5" fill="none" stroke="#b4b4b0"/><path d="M393.5 377.5 V380.5 H397.5 V390.5 H387.5" fill="none" stroke="#3c3c36"/><rect x="391" y="385" width="5" height="1" fill="#4a5a3a"/><rect x="391" y="387" width="5" height="1" fill="#4a5a3a"/>
<rect x="920" y="377" width="15" height="15" fill="#c8c8c8"/><rect x="934" y="378" width="1" height="14" fill="#000"/><rect x="920" y="391" width="15" height="1" fill="#000"/><rect x="924" y="380" width="6" height="8" fill="#ffff60"/>
<path d="M387.5 394.5 H393.5 V397.5 H397.5 V407.5 H387.5 Z" fill="url(#docg)"/><path d="M387.5 407.5 V394.5 H393.5" fill="none" stroke="#b4b4b0"/><path d="M393.5 394.5 V397.5 H397.5 V407.5 H387.5" fill="none" stroke="#3c3c36"/><rect x="391" y="402" width="5" height="1" fill="#4a5a3a"/><rect x="391" y="404" width="5" height="1" fill="#4a5a3a"/>
<rect x="920" y="394" width="15" height="15" fill="#c8c8c8"/><rect x="934" y="395" width="1" height="14" fill="#000"/><rect x="920" y="408" width="15" height="1" fill="#000"/><rect x="924" y="397" width="6" height="8" fill="#ffff60"/>
<path d="M387.5 411.5 H393.5 V414.5 H397.5 V424.5 H387.5 Z" fill="url(#docg)"/><path d="M387.5 424.5 V411.5 H393.5" fill="none" stroke="#b4b4b0"/><path d="M393.5 411.5 V414.5 H397.5 V424.5 H387.5" fill="none" stroke="#3c3c36"/><rect x="391" y="419" width="5" height="1" fill="#4a5a3a"/><rect x="391" y="421" width="5" height="1" fill="#4a5a3a"/>
<rect x="920" y="411" width="15" height="15" fill="#c8c8c8"/><rect x="934" y="412" width="1" height="14" fill="#000"/><rect x="920" y="425" width="15" height="1" fill="#000"/><rect x="924" y="414" width="6" height="8" fill="#ffff60"/>
<path d="M387.5 428.5 H393.5 V431.5 H397.5 V441.5 H387.5 Z" fill="url(#docg)"/><path d="M387.5 441.5 V428.5 H393.5" fill="none" stroke="#b4b4b0"/><path d="M393.5 428.5 V431.5 H397.5 V441.5 H387.5" fill="none" stroke="#3c3c36"/><rect x="391" y="436" width="5" height="1" fill="#4a5a3a"/><rect x="391" y="438" width="5" height="1" fill="#4a5a3a"/>
<rect x="920" y="428" width="15" height="15" fill="#c8c8c8"/><rect x="934" y="429" width="1" height="14" fill="#000"/><rect x="920" y="442" width="15" height="1" fill="#000"/><rect x="924" y="431" width="6" height="8" fill="#ffff60"/>
<path d="M387.5 445.5 H393.5 V448.5 H397.5 V458.5 H387.5 Z" fill="url(#docg)"/><path d="M387.5 458.5 V445.5 H393.5" fill="none" stroke="#b4b4b0"/><path d="M393.5 445.5 V448.5 H397.5 V458.5 H387.5" fill="none" stroke="#3c3c36"/><rect x="391" y="453" width="5" height="1" fill="#4a5a3a"/><rect x="391" y="455" width="5" height="1" fill="#4a5a3a"/>
<rect x="920" y="445" width="15" height="15" fill="#c8c8c8"/><rect x="934" y="446" width="1" height="14" fill="#000"/><rect x="920" y="459" width="15" height="1" fill="#000"/><rect x="924" y="448" width="6" height="8" fill="#ffff60"/>
<path d="M387.5 462.5 H393.5 V465.5 H397.5 V475.5 H387.5 Z" fill="url(#docg)"/><path d="M387.5 475.5 V462.5 H393.5" fill="none" stroke="#b4b4b0"/><path d="M393.5 462.5 V465.5 H397.5 V475.5 H387.5" fill="none" stroke="#3c3c36"/><rect x="391" y="470" width="5" height="1" fill="#4a5a3a"/><rect x="391" y="472" width="5" height="1" fill="#4a5a3a"/>
<rect x="920" y="462" width="15" height="15" fill="#c8c8c8"/><rect x="934" y="463" width="1" height="14" fill="#000"/><rect x="920" y="476" width="15" height="1" fill="#000"/><rect x="924" y="465" width="6" height="8" fill="#ffff60"/>
<path d="M387.5 479.5 H393.5 V482.5 H397.5 V492.5 H387.5 Z" fill="url(#docg)"/><path d="M387.5 492.5 V479.5 H393.5" fill="none" stroke="#b4b4b0"/><path d="M393.5 479.5 V482.5 H397.5 V492.5 H387.5" fill="none" stroke="#3c3c36"/><rect x="391" y="487" width="5" height="1" fill="#4a5a3a"/><rect x="391" y="489" width="5" height="1" fill="#4a5a3a"/>
<rect x="920" y="479" width="15" height="15" fill="#c8c8c8"/><rect x="934" y="480" width="1" height="14" fill="#000"/><rect x="920" y="493" width="15" height="1" fill="#000"/><rect x="924" y="482" width="6" height="8" fill="#ffff60"/>
<rect x="334.5" y="499.5" width="8" height="8" fill="#fff" stroke="#9c9c9c"/>
<rect x="336" y="503" width="5" height="1" fill="#000"/>
<rect x="338" y="501" width="1" height="5" fill="#000"/>
<path d="M346.5 508.5 V498.5 Q346.5 496.5 348.5 496.5 H352.5 L354 498 H360.5 V508.5 Z" fill="url(#fold)" stroke="#a8a470"/><path d="M347 508.5 H360.5 V498.5" fill="none" stroke="#6a6a40"/>
<rect x="920" y="496" width="15" height="15" fill="#c8c8c8"/><rect x="934" y="497" width="1" height="14" fill="#000"/><rect x="920" y="510" width="15" height="1" fill="#000"/><path d="M924 497 L930 502.5 L924 508Z" fill="#2a9c0e"/>
<rect x="334.5" y="516.5" width="8" height="8" fill="#fff" stroke="#9c9c9c"/>
<rect x="336" y="520" width="5" height="1" fill="#000"/>
<rect x="338" y="518" width="1" height="5" fill="#000"/>
<rect x="346.5" y="516.5" width="13" height="9.5" fill="#f6f2d0" stroke="#6a6030"/><rect x="345" y="513" width="3" height="1" fill="#1d5aa8"/><rect x="345" y="514" width="3" height="1" fill="#5aaaf0"/><rect x="353" y="513" width="3" height="1" fill="#1d5aa8"/><rect x="353" y="514" width="3" height="1" fill="#5aaaf0"/><rect x="346" y="515" width="9" height="1" fill="#1d5aa8"/><rect x="346" y="516" width="9" height="1" fill="#5aaaf0"/><rect x="357" y="515" width="3" height="1" fill="#1d5aa8"/><rect x="357" y="516" width="3" height="1" fill="#5aaaf0"/><rect x="347" y="517" width="7" height="1" fill="#1d5aa8"/><rect x="347" y="518" width="7" height="1" fill="#5aaaf0"/><rect x="356" y="517" width="3" height="1" fill="#1d5aa8"/><rect x="356" y="518" width="3" height="1" fill="#5aaaf0"/><rect x="348" y="519" width="5" height="1" fill="#1d5aa8"/><rect x="348" y="520" width="5" height="1" fill="#5aaaf0"/><rect x="355" y="519" width="3" height="1" fill="#1d5aa8"/><rect x="355" y="520" width="3" height="1" fill="#5aaaf0"/><rect x="349" y="521" width="7" height="1" fill="#1d5aa8"/><rect x="349" y="522" width="7" height="1" fill="#5aaaf0"/><rect x="349" y="523" width="2" height="1" fill="#1d5aa8"/><rect x="349" y="524" width="2" height="1" fill="#5aaaf0"/><rect x="353" y="523" width="3" height="1" fill="#1d5aa8"/><rect x="353" y="524" width="3" height="1" fill="#5aaaf0"/>
<rect x="920" y="513" width="15" height="15" fill="#c8c8c8"/><rect x="934" y="514" width="1" height="14" fill="#000"/><rect x="920" y="527" width="15" height="1" fill="#000"/><path d="M924 514 L930 519.5 L924 525Z" fill="#2a9c0e"/>
<rect x="334.5" y="533.5" width="8" height="8" fill="#fff" stroke="#9c9c9c"/>
<rect x="336" y="537" width="5" height="1" fill="#000"/>
<g transform="translate(346,530)"><path d="M2 0 H14 V12 L12 14 H0 V2 Z" fill="#0b5a90"/><rect x="1" y="1" width="12" height="12" fill="#0f66a2" opacity="0.7"/><rect x="3.2" y="3" width="1.8" height="1.7" fill="#e6f6ff"/><path d="M3 5.8 H5 L4.6 10.8 H2.6 Z" fill="#e6f6ff"/><path d="M6 4 H10 Q11.7 4 11.7 5.6 Q11.7 6.8 10.7 7.2 Q11.9 7.7 11.7 9.2 Q11.4 10.8 9.6 10.8 H5.2 Z" fill="#e6f6ff"/><rect x="8" y="5.3" width="1.6" height="1.3" fill="#0b5a90"/><rect x="7.8" y="8.2" width="1.7" height="1.4" fill="#0b5a90"/></g>
<rect x="920" y="530" width="15" height="15" fill="#c8c8c8"/><rect x="934" y="531" width="1" height="14" fill="#000"/><rect x="920" y="544" width="15" height="1" fill="#000"/><rect x="924" y="533" width="6" height="8" fill="#2a9a10"/>
<rect x="347.5" y="550.5" width="8" height="8" fill="#fff" stroke="#9c9c9c"/>
<rect x="349" y="554" width="5" height="1" fill="#000"/>
<path d="M358.5 552.5 L362.5 548.5 H372.5 V558.0 L368.5 562.0 V552.5 Z" fill="#f2f27a" stroke="#6a6a08"/><path d="M363.5 552.5 L367.5 548.5 M360.5 550.5 H370.5 M368.5 557.25 L372.5 553.25 M370.5 550.5 V560.0" stroke="#6a6a08" stroke-width="0.8" fill="none"/><rect x="358.5" y="552.5" width="10" height="9.5" fill="#ffff10" stroke="#6a6a08" stroke-width="1.1"/><path d="M363.5 552.5 V562.0 M358.5 557.25 H368.5" stroke="#6a6a08" stroke-width="1.1"/>
<rect x="920" y="547" width="15" height="15" fill="#c8c8c8"/><rect x="934" y="548" width="1" height="14" fill="#000"/><rect x="920" y="561" width="15" height="1" fill="#000"/><rect x="924" y="550" width="6" height="8" fill="#2a9a10"/>
<rect x="360.5" y="567.5" width="8" height="8" fill="#fff" stroke="#9c9c9c"/>
<rect x="362" y="571" width="5" height="1" fill="#000"/>
<rect x="364" y="569" width="1" height="5" fill="#000"/>
<path d="M371.5 569.5 L375.5 565.5 H385.5 V575.0 L381.5 579.0 V569.5 Z" fill="#f2f27a" stroke="#6a6a08"/><path d="M376.5 569.5 L380.5 565.5 M373.5 567.5 H383.5 M381.5 574.25 L385.5 570.25 M383.5 567.5 V577.0" stroke="#6a6a08" stroke-width="0.8" fill="none"/><rect x="371.5" y="569.5" width="10" height="9.5" fill="#ffff10" stroke="#6a6a08" stroke-width="1.1"/><path d="M376.5 569.5 V579.0 M371.5 574.25 H381.5" stroke="#6a6a08" stroke-width="1.1"/>
<rect x="920" y="564" width="15" height="15" fill="#c8c8c8"/><rect x="934" y="565" width="1" height="14" fill="#000"/><rect x="920" y="578" width="15" height="1" fill="#000"/><rect x="924" y="567" width="6" height="8" fill="#2a9a10"/>
<rect x="360.5" y="584.5" width="8" height="8" fill="#fff" stroke="#9c9c9c"/>
<rect x="362" y="588" width="5" height="1" fill="#000"/>
<path d="M371.5 586.5 L375.5 582.5 H385.5 V592.0 L381.5 596.0 V586.5 Z" fill="#f2f27a" stroke="#6a6a08"/><path d="M376.5 586.5 L380.5 582.5 M373.5 584.5 H383.5 M381.5 591.25 L385.5 587.25 M383.5 584.5 V594.0" stroke="#6a6a08" stroke-width="0.8" fill="none"/><rect x="371.5" y="586.5" width="10" height="9.5" fill="#ffff10" stroke="#6a6a08" stroke-width="1.1"/><path d="M376.5 586.5 V596.0 M371.5 591.25 H381.5" stroke="#6a6a08" stroke-width="1.1"/>
<rect x="920" y="581" width="15" height="15" fill="#c8c8c8"/><rect x="934" y="582" width="1" height="14" fill="#000"/><rect x="920" y="595" width="15" height="1" fill="#000"/><rect x="924" y="584" width="6" height="8" fill="#2a9a10"/>
<rect x="373.5" y="601.5" width="8" height="8" fill="#fff" stroke="#9c9c9c"/>
<rect x="375" y="605" width="5" height="1" fill="#000"/>
<rect x="377" y="603" width="1" height="5" fill="#000"/>
<path d="M384.5 603.5 L388.5 599.5 H398.5 V609.0 L394.5 613.0 V603.5 Z" fill="#f2f27a" stroke="#6a6a08"/><path d="M389.5 603.5 L393.5 599.5 M386.5 601.5 H396.5 M394.5 608.25 L398.5 604.25 M396.5 601.5 V611.0" stroke="#6a6a08" stroke-width="0.8" fill="none"/><rect x="384.5" y="603.5" width="10" height="9.5" fill="#ffff10" stroke="#6a6a08" stroke-width="1.1"/><path d="M389.5 603.5 V613.0 M384.5 608.25 H394.5" stroke="#6a6a08" stroke-width="1.1"/>
<rect x="920" y="598" width="15" height="15" fill="#c8c8c8"/><rect x="934" y="599" width="1" height="14" fill="#000"/><rect x="920" y="612" width="15" height="1" fill="#000"/><rect x="924" y="601" width="6" height="8" fill="#2a9a10"/>
<rect x="373.5" y="618.5" width="8" height="8" fill="#fff" stroke="#9c9c9c"/>
<rect x="375" y="622" width="5" height="1" fill="#000"/>
<path d="M384.5 620.5 L388.5 616.5 H398.5 V626.0 L394.5 630.0 V620.5 Z" fill="#f2f27a" stroke="#6a6a08"/><path d="M389.5 620.5 L393.5 616.5 M386.5 618.5 H396.5 M394.5 625.25 L398.5 621.25 M396.5 618.5 V628.0" stroke="#6a6a08" stroke-width="0.8" fill="none"/><rect x="384.5" y="620.5" width="10" height="9.5" fill="#ffff10" stroke="#6a6a08" stroke-width="1.1"/><path d="M389.5 620.5 V630.0 M384.5 625.25 H394.5" stroke="#6a6a08" stroke-width="1.1"/>
<rect x="920" y="615" width="15" height="15" fill="#c8c8c8"/><rect x="934" y="616" width="1" height="14" fill="#000"/><rect x="920" y="629" width="15" height="1" fill="#000"/><rect x="924" y="618" width="6" height="8" fill="#2a9a10"/>
<rect x="386.5" y="635.5" width="8" height="8" fill="#fff" stroke="#9c9c9c"/>
<rect x="388" y="639" width="5" height="1" fill="#000"/>
<rect x="390" y="637" width="1" height="5" fill="#000"/>
<path d="M397.5 637.5 L401.5 633.5 H411.5 V643.0 L407.5 647.0 V637.5 Z" fill="#f2f27a" stroke="#6a6a08"/><path d="M402.5 637.5 L406.5 633.5 M399.5 635.5 H409.5 M407.5 642.25 L411.5 638.25 M409.5 635.5 V645.0" stroke="#6a6a08" stroke-width="0.8" fill="none"/><rect x="397.5" y="637.5" width="10" height="9.5" fill="#ffff10" stroke="#6a6a08" stroke-width="1.1"/><path d="M402.5 637.5 V647.0 M397.5 642.25 H407.5" stroke="#6a6a08" stroke-width="1.1"/>
<rect x="920" y="632" width="15" height="15" fill="#c8c8c8"/><rect x="934" y="633" width="1" height="14" fill="#000"/><rect x="920" y="646" width="15" height="1" fill="#000"/><rect x="924" y="635" width="6" height="8" fill="#2a9a10"/>
</svg>
<div class="t" style="left:364.5px;top:122px;font-size:11.65px;color:#111">Advantage AG - fridgeNext-App</div>
<div class="t" style="left:938.5px;top:122px;font-size:11.8px;color:#111">in Bearbeitung</div>
<div class="t" style="left:364.5px;top:139px;font-size:11.65px;color:#111">AfW - Fr&uuml;hwarnsystem</div>
<div class="t" style="left:938.5px;top:139px;font-size:11.8px;color:#111">in Bearbeitung</div>
<div class="t" style="left:377.5px;top:156px;font-size:11.65px;color:#111">Systemspezifikationen</div>
<div class="t" style="left:938.5px;top:156px;font-size:11.8px;color:#111">in Bearbeitung</div>
<div class="t" style="left:390.5px;top:173px;font-size:11.65px;color:#111">Gesamtsystemspezifikation (Pflichtenheft) - Anforderungen</div>
<div class="t" style="left:938.5px;top:173px;font-size:11.8px;color:#111">in Bearbeitung</div>
<div class="t" style="left:390.5px;top:190px;font-size:11.65px;color:#111">Kundenanforderungen</div>
<div class="t" style="left:938.5px;top:190px;font-size:11.8px;color:#111">in Bearbeitung</div>
<div class="t" style="left:403px;top:207px;font-size:11.65px;color:#fff">Anbindung von Sensoren zur &Uuml;bertragung von Daten</div>
<div class="t" style="left:938.5px;top:207px;font-size:11.8px;color:#fff">definiert</div>
<div class="t" style="left:403px;top:224px;font-size:11.65px;color:#111">Ausl&ouml;sen und Verbreiten von Warnungen nach Schweregrad</div>
<div class="t" style="left:938.5px;top:224px;font-size:11.8px;color:#111">definiert</div>
<div class="t" style="left:403px;top:241px;font-size:11.65px;color:#111">Auswertung des Datenvolumens pro Zeiteinheit</div>
<div class="t" style="left:938.5px;top:241px;font-size:11.8px;color:#111">definiert</div>
<div class="t" style="left:403px;top:258px;font-size:11.65px;color:#111">Automatische Reaktion</div>
<div class="t" style="left:938.5px;top:258px;font-size:11.8px;color:#111">definiert</div>
<div class="t" style="left:403px;top:275px;font-size:11.65px;color:#111">Darstellung inaktiver Sensoren</div>
<div class="t" style="left:938.5px;top:275px;font-size:11.8px;color:#111">definiert</div>
<div class="t" style="left:403px;top:292px;font-size:11.65px;color:#111">Echtzeitunterst&uuml;tzung</div>
<div class="t" style="left:938.5px;top:292px;font-size:11.8px;color:#111">definiert</div>
<div class="t" style="left:403px;top:309px;font-size:11.65px;color:#111">Einsch&auml;tzung und Bewertung der Daten</div>
<div class="t" style="left:938.5px;top:309px;font-size:11.8px;color:#111">definiert</div>
<div class="t" style="left:403px;top:326px;font-size:11.65px;color:#111">Entwarnung</div>
<div class="t" style="left:938.5px;top:326px;font-size:11.8px;color:#111">definiert</div>
<div class="t" style="left:403px;top:343px;font-size:11.65px;color:#111">Export von Daten mittels IFWS-Format</div>
<div class="t" style="left:938.5px;top:343px;font-size:11.8px;color:#111">definiert</div>
<div class="t" style="left:403px;top:360px;font-size:11.65px;color:#111">exzellentes UI nach DIN_UI99378</div>
<div class="t" style="left:938.5px;top:360px;font-size:11.8px;color:#111">definiert</div>
<div class="t" style="left:403px;top:377px;font-size:11.65px;color:#111">Festlegung von Schwellwerten und Pr&uuml;fung</div>
<div class="t" style="left:938.5px;top:377px;font-size:11.8px;color:#111">definiert</div>
<div class="t" style="left:403px;top:394px;font-size:11.65px;color:#111">Sammlung der Daten</div>
<div class="t" style="left:938.5px;top:394px;font-size:11.8px;color:#111">definiert</div>
<div class="t" style="left:403px;top:411px;font-size:11.65px;color:#111">Skalierbarkeit des CMS</div>
<div class="t" style="left:938.5px;top:411px;font-size:11.8px;color:#111">definiert</div>
<div class="t" style="left:403px;top:428px;font-size:11.65px;color:#111">&Uuml;bersicht datenliefernder Sensoren</div>
<div class="t" style="left:938.5px;top:428px;font-size:11.8px;color:#111">definiert</div>
<div class="t" style="left:403px;top:445px;font-size:11.65px;color:#111">&Uuml;berwachung und Auswertung von Daten</div>
<div class="t" style="left:938.5px;top:445px;font-size:11.8px;color:#111">definiert</div>
<div class="t" style="left:403px;top:462px;font-size:11.65px;color:#111">Verf&uuml;gbarkeit 24_7</div>
<div class="t" style="left:938.5px;top:462px;font-size:11.8px;color:#111">definiert</div>
<div class="t" style="left:403px;top:479px;font-size:11.65px;color:#111">verlustfreie Datenbehandlung</div>
<div class="t" style="left:938.5px;top:479px;font-size:11.8px;color:#111">definiert</div>
<div class="t" style="left:364.5px;top:496px;font-size:11.65px;color:#111">EAM - MobilityEurope</div>
<div class="t" style="left:938.5px;top:496px;font-size:11.8px;color:#111">in Bearbeitung</div>
<div class="t" style="left:364.5px;top:513px;font-size:11.65px;color:#111">Rhein&uuml;berwachung - Pegel online</div>
<div class="t" style="left:938.5px;top:513px;font-size:11.8px;color:#111">in Bearbeitung</div>
<div class="t" style="left:364.5px;top:530px;font-size:11.65px;color:#111">Systementwicklung</div>
<div class="t" style="left:938.5px;top:530px;font-size:11.8px;color:#111">in Bearbeitung</div>
<div class="t" style="left:377.5px;top:547px;font-size:11.65px;color:#111">Systeme</div>
<div class="t" style="left:938.5px;top:547px;font-size:11.8px;color:#111">in Bearbeitung</div>
<div class="t" style="left:390.5px;top:564px;font-size:11.65px;color:#111">w3flex.Cloud</div>
<div class="t" style="left:938.5px;top:564px;font-size:11.8px;color:#111">in Bearbeitung</div>
<div class="t" style="left:390.5px;top:581px;font-size:11.65px;color:#111">w3flex.CMS</div>
<div class="t" style="left:938.5px;top:581px;font-size:11.8px;color:#111">in Bearbeitung</div>
<div class="t" style="left:403.5px;top:598px;font-size:11.65px;color:#111">Hardware</div>
<div class="t" style="left:938.5px;top:598px;font-size:11.8px;color:#111">in Bearbeitung</div>
<div class="t" style="left:403.5px;top:615px;font-size:11.65px;color:#111">Software</div>
<div class="t" style="left:938.5px;top:615px;font-size:11.8px;color:#111">in Bearbeitung</div>
<div class="t" style="left:416.5px;top:632px;font-size:11.65px;color:#111">CoreComponent</div>
<div class="t" style="left:938.5px;top:632px;font-size:11.8px;color:#111">in Bearbeitung</div></div>
<div class="a" style="left:129px;top:394px;width:190px;height:215px;background:rgba(0,0,0,0.28);filter:blur(1px)"></div>
<div class="a" style="left:126px;top:391px;width:190px;height:215px;background:#f0f0f0;border:1px solid #979797"></div>
<div class="a" style="left:128px;top:438px;width:22px;height:22px;background:#f4f4f4;border:1px solid;border-color:#fff #b8b8b8 #b8b8b8 #fff"></div>
<div class="a" style="left:151px;top:438px;width:160px;height:22px;background:linear-gradient(90deg,#3a8ee8 0%,#5aa0ec 40%,#8cc0f2 72%,#f0f0f0 100%)"></div>
<div class="t" style="left:153px;top:398px;font-size:11.7px;font-weight:700;color:#111">&Ouml;<u>f</u>fnen</div>
<div class="t" style="left:153px;top:420px;font-size:11.7px;font-weight:400;color:#111">In MS Word darstellen</div>
<div class="t" style="left:153px;top:442px;font-size:11.7px;font-weight:400;color:#fff">In MS Excel darstellen</div>
<div class="t" style="left:153px;top:464px;font-size:11.7px;font-weight:400;color:#111">Als PDF-Datei speichern</div>
<div class="t" style="left:153px;top:486px;font-size:11.7px;font-weight:400;color:#111">Als HTML-Datei speichern</div>
<div class="t" style="left:153px;top:508px;font-size:11.7px;font-weight:400;color:#111">Als XML-Datei speichern</div>
<div class="t" style="left:153px;top:530px;font-size:11.7px;font-weight:400;color:#111">Drucken</div>
<div class="t" style="left:153px;top:558px;font-size:11.7px;font-weight:400;color:#111"><u>E</u>igenschaften...</div>
<div class="t" style="left:153px;top:586px;font-size:11.7px;font-weight:400;color:#111">Anpassen...</div>
<div class="a" style="left:129px;top:550px;width:184px;height:1px;background:#c4c4c4"></div><div class="a" style="left:129px;top:551px;width:184px;height:1px;background:#fff"></div>
<div class="a" style="left:129px;top:578px;width:184px;height:1px;background:#c4c4c4"></div><div class="a" style="left:129px;top:579px;width:184px;height:1px;background:#fff"></div>
<svg style="left:0;top:0" width="1038" height="649" viewBox="0 0 1038 649">
<rect x="138.5" y="424.5" width="7" height="10" fill="#f4f0c4" stroke="#8a8a50"/><rect x="132.5" y="422.5" width="9" height="10" fill="#fff" stroke="#1a2a80" stroke-width="1.2"/><rect x="132" y="422" width="10" height="1.5" fill="#1a2a80"/><text x="137" y="431.3" text-anchor="middle" font-family="Liberation Sans" font-weight="700" font-size="8.5" fill="#1a3aa8">W</text>
<rect x="138.5" y="446.5" width="7" height="10" fill="#f4f0c4" stroke="#8a8a50"/><rect x="132.5" y="444.5" width="9" height="10" fill="#e8f6e0" stroke="#106010" stroke-width="1.2"/><rect x="132" y="444" width="10" height="1.5" fill="#106010"/><text x="137" y="453.3" text-anchor="middle" font-family="Liberation Sans" font-weight="700" font-size="8.5" fill="#1a8a1a">X</text>
<path d="M135.5 463.5 H143 L147.5 468 V479.5 H135.5 Z" fill="#fff" stroke="#a8a8a8"/><path d="M135.5 479.5 H147.5" stroke="#404040"/><rect x="131" y="465" width="11" height="4" fill="#d80c10"/><path d="M137.5 478 Q140.5 472 141 469 Q142 474 146 475.5 Q142 475 138.5 478" stroke="#e02828" fill="none" stroke-width="0.9"/>
<path d="M135.5 487.5 H142 L146.5 492 V501.5 H135.5 Z" fill="#f4f2c8" stroke="#8a8a60"/><path d="M142 487.5 V492 H146.5" fill="none" stroke="#8a8a60"/><text x="139.5" y="498" text-anchor="middle" font-family="Liberation Sans" font-size="7" fill="#222" letter-spacing="-0.3">htm</text>
<path d="M135.5 509.5 H142 L145.5 513 V522.5 H135.5 Z" fill="#f0f2c4" stroke="#8a8a60"/><path d="M142 509.5 V513 H145.5" fill="none" stroke="#8a8a60"/><path d="M138.5 514.5 L137 516 L138.5 517.5 M142.5 514.5 L144 516 L142.5 517.5" stroke="#3a8a3a" fill="none" stroke-width="0.9"/><rect x="140.2" y="515.6" width="0.8" height="0.8" fill="#3a8a3a"/>
<g transform="translate(-725,449)"><path d="M857.5 90 Q858 87.5 861 87 L868 86.5 L873 88 V91 L866 95.5 H861 Q857.5 95 857.5 92 Z" fill="#d4d8de" stroke="#5a5a5a" stroke-width="0.8"/><path d="M857.5 92 L861 94.8 H866 L873 90.8 V92.8 L866 96.6 H861 L857.5 94 Z" fill="#4a4a4a"/><path d="M862 87 L867 81.8 L873 83.6 L868.6 88.2 Z" fill="#eef2b4" stroke="#6a6a48" stroke-width="0.7"/><circle cx="864" cy="90" r="0.9" fill="#2a70c0"/></g>
<g transform="translate(-358,476)"><path d="M490.5 84.5 H500.5 V93.5 H490.5 Z" fill="#f4f4f4" stroke="#a0a0a0"/><path d="M490.5 93.5 H500.5 V88" stroke="#444" fill="none"/><path d="M492.5 91.5 L498 85 H503.5 V90 H499.5 L496.5 93 Z" fill="url(#chk)"/><path d="M492.5 91.5 L498 85 H503.5 M496.5 93 L499.5 90 H503.5" stroke="#2a2418" fill="none" stroke-width="0.9"/><rect x="504" y="84" width="2.5" height="6" fill="#1a70b0"/></g>
<rect x="134.5" y="587.5" width="12" height="12" fill="#f4f4f4" stroke="#4a6aa8"/><rect x="135" y="589" width="5" height="10" fill="#f6e6a0"/><rect x="134" y="587" width="13" height="2" fill="#2a58a8"/><path d="M140.5 589 V599" stroke="#8aa0c8"/>
</svg>
</body></html>
